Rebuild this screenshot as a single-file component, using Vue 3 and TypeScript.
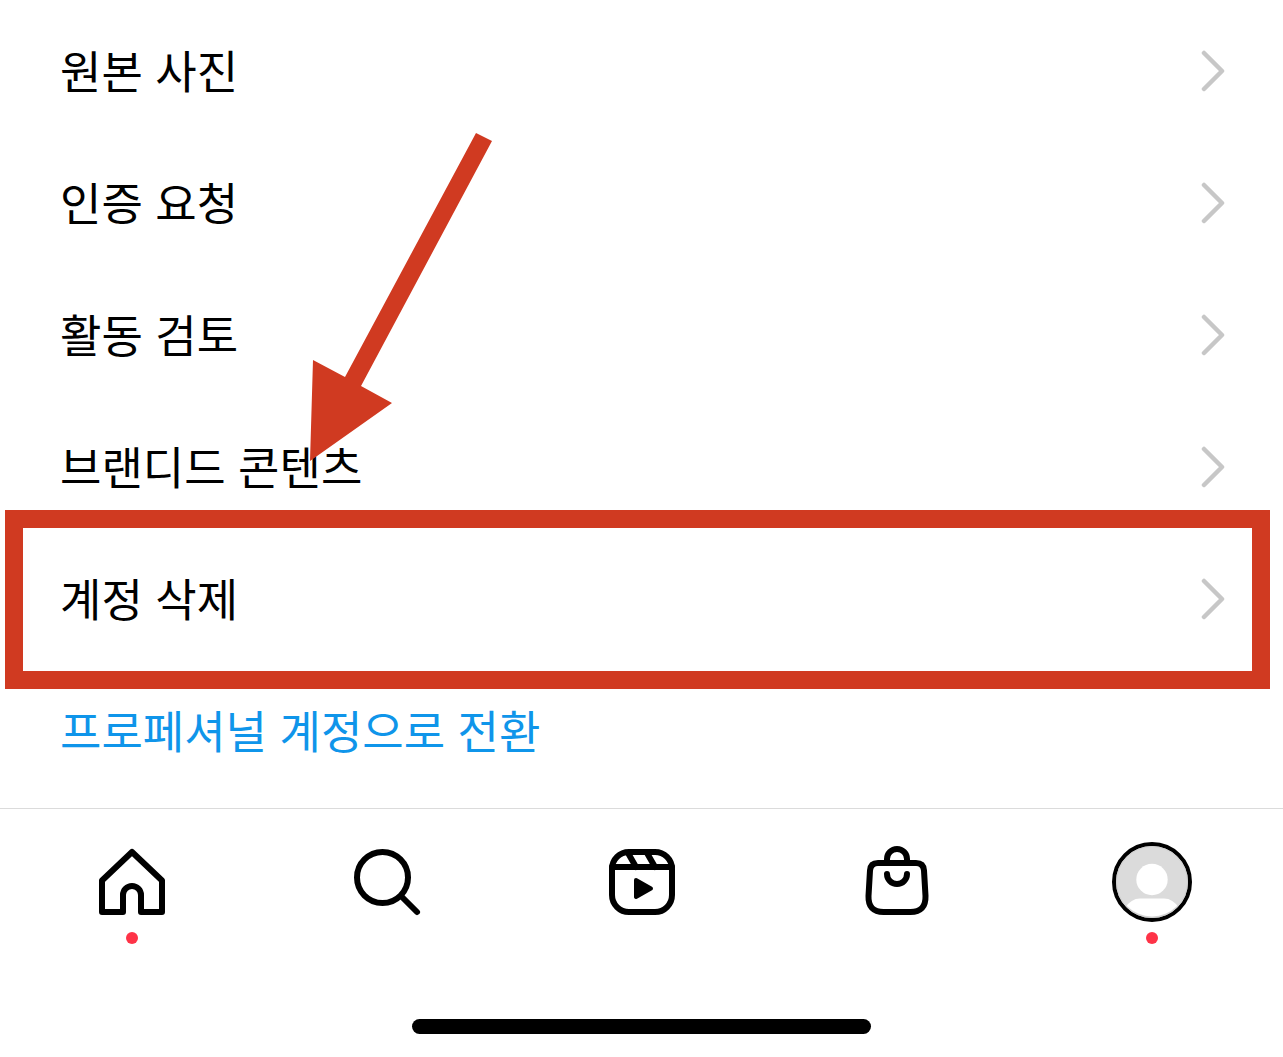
<script setup lang="ts">
interface MenuRow {
  label: string
  kind?: 'highlight' | 'accent'
}

const rows: MenuRow[] = [
  { label: '원본 사진' },
  { label: '인증 요청' },
  { label: '활동 검토' },
  { label: '브랜디드 콘텐츠' },
  { label: '계정 삭제', kind: 'highlight' },
  { label: '프로페셔널 계정으로 전환', kind: 'accent' },
]
</script>

<template>
  <div class="screen">
    <main class="menu">
      <a v-for="row in rows" :key="row.label" href="#" class="row" :class="row.kind">
        <span class="label">{{ row.label }}</span>
        <svg v-if="row.kind !== 'accent'" class="chevron" viewBox="0 0 26 42" aria-hidden="true">
          <path d="M4 3 22 21 4 39" />
        </svg>
        <template v-if="row.kind === 'highlight'">
          <span class="frame"></span>
          <svg class="arrow" viewBox="0 0 186 330" aria-hidden="true">
            <path d="M168 0 184 8 53 253 84 270 2 328 5 227 37 244Z" />
          </svg>
        </template>
      </a>
    </main>

    <nav class="tabs">
      <button type="button" class="tab" aria-label="홈">
        <svg class="icon" viewBox="0 0 81 81">
          <path d="M41 10 11 38.5V70H32V53a9 9 0 0 1 18 0V70H71V38.5Z" />
        </svg>
        <span class="dot"></span>
      </button>
      <button type="button" class="tab" aria-label="검색">
        <svg class="icon" viewBox="0 0 81 81">
          <circle cx="36.5" cy="35.5" r="25.5" />
          <path d="M55 54 71 70" />
        </svg>
      </button>
      <button type="button" class="tab" aria-label="릴스">
        <svg class="icon" viewBox="0 0 81 81">
          <rect x="11" y="10" width="60" height="60" rx="17" />
          <path d="M11 25H71M27 11 35 25M46 11 54 25" />
          <path class="play" d="M35 38 50 46.5 35 55Z" />
        </svg>
      </button>
      <button type="button" class="tab" aria-label="쇼핑">
        <svg class="icon" viewBox="0 0 81 81">
          <path d="M22 21H60Q67.5 21 68 28.5L69.5 54Q70 70 54.5 70H27.5Q12 70 12.5 54L14 28.5Q14.5 21 22 21Z" />
          <path d="M31 21V17a10 10 0 0 1 20 0V21M31 32a10 10 0 0 0 20 0" />
        </svg>
      </button>
      <button type="button" class="tab" aria-label="프로필">
        <svg class="avatar" viewBox="0 0 81 81">
          <defs>
            <clipPath id="avatar-clip"><circle cx="41" cy="40" r="34.5" /></clipPath>
          </defs>
          <circle cx="41" cy="40" r="38" fill="#dbdbdb" stroke="#000" stroke-width="4" />
          <circle cx="41" cy="40" r="35.5" fill="none" stroke="#cfcfcf" stroke-width="1" />
          <circle cx="41" cy="37.5" r="15.7" fill="#fff" />
          <path clip-path="url(#avatar-clip)" fill="#fff" d="M14 66Q20 56.5 29 56.5H53Q62 56.5 68 66V80H14Z" />
        </svg>
        <span class="dot"></span>
      </button>
    </nav>

    <div class="home-bar"></div>
  </div>
</template>

<style>
body {
  margin: 0;
  background: #fff;
}
</style>

<style scoped>
.screen {
  display: flex;
  flex-direction: column;
  min-height: 100vh;
  box-sizing: border-box;
  padding-bottom: 23px;
  background: #fff;
  font-family: "Liberation Sans", "Noto Sans CJK KR", sans-serif;
}

.menu {
  padding: 5px 0 11px;
}

.row {
  position: relative;
  display: flex;
  align-items: center;
  justify-content: space-between;
  height: 132px;
  padding: 0 57px 0 60px;
  color: #000;
  text-decoration: none;
}

.label {
  padding-top: 6px;
  font-size: 45px;
  line-height: 60px;
  white-space: nowrap;
}

.accent {
  color: #0f95ea;
}

.chevron {
  width: 26px;
  height: 42px;
  fill: none;
  stroke: #c7c7c7;
  stroke-width: 4.5;
  stroke-linecap: round;
  stroke-linejoin: round;
}

.frame {
  position: absolute;
  inset: -23px 13px -24px 5px;
  border: 18px solid #d03a21;
}

.arrow {
  position: absolute;
  top: -400px;
  left: 308px;
  width: 186px;
  height: 330px;
  fill: #d03a21;
  pointer-events: none;
}

.tabs {
  display: flex;
  padding: 33px 4px 0;
  border-top: 1px solid #dbdbdb;
}

.tab {
  display: flex;
  flex: 1;
  flex-direction: column;
  align-items: center;
  gap: 9px;
  padding: 0;
  border: 0;
  background: none;
}

.icon,
.avatar {
  width: 81px;
  height: 81px;
}

.icon {
  fill: none;
  stroke: #000;
  stroke-width: 6;
  stroke-linecap: round;
  stroke-linejoin: round;
}

.icon .play {
  fill: #000;
  stroke-width: 4;
}

.dot {
  width: 12px;
  height: 12px;
  border-radius: 50%;
  background: #fe3347;
}

.home-bar {
  align-self: center;
  width: 459px;
  height: 15px;
  margin-top: auto;
  border-radius: 8px;
  background: #000;
}
</style>
